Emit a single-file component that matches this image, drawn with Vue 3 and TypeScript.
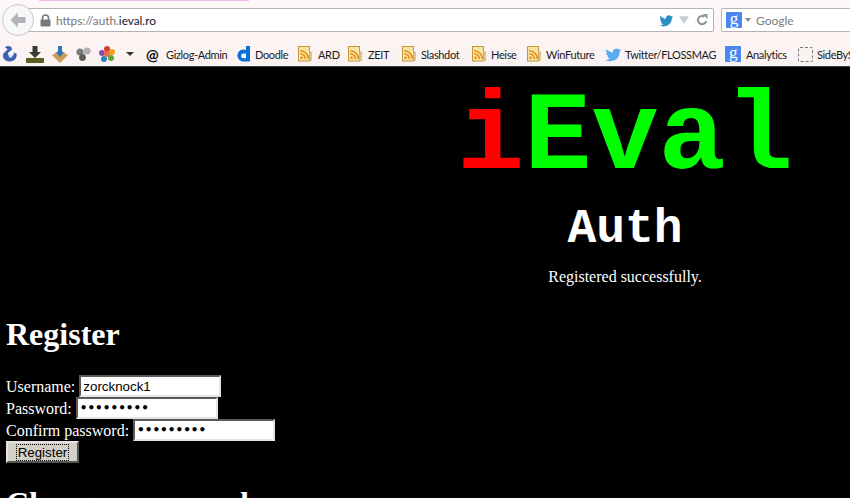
<script setup lang="ts">
interface Mark { label: string; icon: string; w: number; span: number }
const marks: Mark[] = [
  { label: 'Gizlog-Admin', icon: 'at', w: 20, span: 91 },
  { label: 'Doodle', icon: 'doodle', w: 18, span: 61 },
  { label: 'ARD', icon: 'rss', w: 20, span: 50 },
  { label: 'ZEIT', icon: 'rss', w: 20, span: 54 },
  { label: 'Slashdot', icon: 'rss', w: 19, span: 70 },
  { label: 'Heise', icon: 'rss', w: 19, span: 55 },
  { label: 'WinFuture', icon: 'rss', w: 19, span: 78 },
  { label: 'Twitter/FLOSSMAG', icon: 'bird', w: 20, span: 120 },
  { label: 'Analytics', icon: 'g', w: 21, span: 73 },
  { label: 'SideBySide', icon: 'dash', w: 19, span: 80 }
]
</script>

<template>
  <div class="page">
    <header class="chrome">
      <div class="tabline"><span class="tabglow"></span></div>
      <div class="navrow">
        <div class="back">
          <svg width="18" height="18" viewBox="0 0 18 18"><path d="M9 1.500 1.500 9 9 16.500v-4.500h7.500V6H9z" fill="#b0b3b8" /></svg>
        </div>
        <div class="url">
          <svg class="lock" width="11" height="13" viewBox="0 0 11 13"><path d="M2.500 6V4a3 3 0 0 1 6 0v2" fill="none" stroke="#77797b" stroke-width="1.600" /><rect x="0.500" y="5.500" width="10" height="7" rx="1" fill="#77797b" /></svg>
          <span class="addr"><span class="dim">https://auth.</span>ieval.ro</span>
          <span class="urlicons">
            <svg width="15" height="13" viewBox="0 0 17 14"><path d="M16 2.500c-.6.300-1.200.4-1.800.5.600-.4 1.100-1 1.300-1.700-.6.400-1.300.6-2 .8A3.200 3.200 0 0 0 8 5C5.500 4.900 3.200 3.700 1.600 1.700.8 3.200 1.200 5 2.600 6c-.5 0-1-.2-1.400-.4 0 1.600 1.100 2.900 2.600 3.200-.5.100-1 .2-1.500.1.400 1.300 1.600 2.200 3 2.200-1.400 1.100-3.200 1.600-5 1.400C6 15.500 14.500 12.800 14.500 4.500c.6-.5 1.100-1.200 1.500-2z" fill="#2b8fc4" /></svg>
            <svg width="10" height="8" viewBox="0 0 12 9"><path d="M0 0h12L6 9z" fill="#c9cdd1" /></svg>
            <svg class="reload" width="12" height="12" viewBox="0 0 13 13"><path d="M11 7.500A4.500 4.500 0 1 1 9 2.800" fill="none" stroke="#8d9399" stroke-width="2.200" /><path d="M7 0h5.500v5.500z" fill="#8d9399" /></svg>
          </span>
        </div>
        <div class="search">
          <span class="gbox">g</span>
          <span class="caret"></span>
          <span class="gname">Google</span>
        </div>
      </div>
      <div class="bookmarks">
        <div class="tools">
          <svg width="16" height="18" viewBox="0 0 16 18"><path d="M3 2c3-2 7-1 7 2 0 2-4 2-4 5 0 2 3 3 5 1.500 1-1 1-2 .5-3l3 1c1 4-2 8-6.500 8S1 14 1 10.500C1 7 5 6 5.500 4.500 5 3.500 3.500 3 3 2z" fill="#3a62b5" /><circle cx="8.500" cy="11" r="1.800" fill="#dfe8fa" /></svg>
          <svg width="18" height="17" viewBox="0 0 18 17"><path d="M6.500 0h5v6h3.500l-6 6-6-6h3.500z" fill="#3b3b35" /><rect x="0" y="12" width="18" height="5" rx="1" fill="#55601c" /></svg>
          <svg width="16" height="17" viewBox="0 0 16 17"><path d="M8 5 16 9 8 17 0 9z" fill="#c99a58" /><path d="M8 5 0 9l3-2 5-4 5 4 3 2z" fill="#e6c48b" /><path d="M6 0h4v6h2l-4 5-4-5h2z" fill="#2d74b8" /></svg>
          <svg width="15" height="14" viewBox="0 0 15 14"><circle cx="4" cy="5" r="3.600" fill="#7c7c7c" /><circle cx="11" cy="4" r="3.600" fill="#b1b1b1" /><circle cx="6.500" cy="10.500" r="3.400" fill="#5d5d5d" /></svg>
          <svg width="16" height="16" viewBox="0 0 16 16"><circle cx="8" cy="3" r="3" fill="#d93a2b" /><circle cx="13" cy="6" r="3" fill="#f0a21f" /><circle cx="12" cy="12" r="3" fill="#56a83c" /><circle cx="5" cy="13" r="3" fill="#2f7fc4" /><circle cx="3" cy="7" r="3" fill="#8a4bb0" /><circle cx="8" cy="8" r="3" fill="#e4713a" /></svg>
          <span class="tcaret"></span>
        </div>
        <div v-for="m in marks" :key="m.label" class="mark" :style="{ width: m.span + 'px' }">
          <span class="micon" :style="{ width: m.w + 'px' }">
            <span v-if="m.icon === 'at'" class="at">@</span>
            <svg v-else-if="m.icon === 'doodle'" width="13" height="16" viewBox="0 0 13 16"><path d="M9 0h4v15.500H6.500a6 6 0 1 1 2.500-11.400zM6.500 7.500a2.400 2.400 0 1 0 0 4.800H9V7.500z" fill="#0a6fd6" /></svg>
            <svg v-else-if="m.icon === 'rss'" width="15" height="16" viewBox="0 0 15 16"><rect x="0.500" y="0.500" width="11" height="14.500" fill="#f6e3a6" stroke="#c29a3c" /><path d="M11.500 4.500 14 6v9h-2.500z" fill="#d9c58c" /><circle cx="3.500" cy="11.800" r="1.300" fill="#e88b12" /><path d="M2.200 7.800a5.200 5.200 0 0 1 5.200 5.200M2.200 4.800a8.200 8.200 0 0 1 8.200 8.200" fill="none" stroke="#e88b12" stroke-width="1.500" /></svg>
            <svg v-else-if="m.icon === 'bird'" width="17" height="15" viewBox="0 0 17 14"><path d="M16 2.500c-.6.300-1.200.4-1.800.5.600-.4 1.100-1 1.300-1.700-.6.400-1.300.6-2 .8A3.200 3.200 0 0 0 8 5C5.500 4.900 3.200 3.700 1.600 1.700.8 3.200 1.200 5 2.600 6c-.5 0-1-.2-1.400-.4 0 1.600 1.100 2.900 2.600 3.200-.5.100-1 .2-1.500.1.400 1.300 1.600 2.200 3 2.200-1.400 1.100-3.200 1.600-5 1.400C6 15.500 14.500 12.800 14.500 4.500c.6-.5 1.100-1.200 1.500-2z" fill="#55acee" /></svg>
            <span v-else-if="m.icon === 'g'" class="gbox">g</span>
            <span v-else class="dash"></span>
          </span>
          <span>{{ m.label }}</span>
        </div>
      </div>
    </header>
    <main class="content">
      <div class="hero">
        <div class="logo"><span class="red">i</span><span class="green">Eval</span></div>
        <h2 class="sub">Auth</h2>
        <p class="msg">Registered successfully.</p>
      </div>
      <h1 class="reg">Register</h1>
      <form class="form" @submit.prevent>
        <div class="line">Username: <input class="field" type="text" value="zorcknock1" /></div>
        <div class="line">Password: <input class="field secret" type="password" value="123456789" /></div>
        <div class="line">Confirm password: <input class="field secret" type="password" value="123456789" /></div>
        <button class="btn" type="submit"><span class="focus">Register</span></button>
      </form>
      <h1 class="change">Change password</h1>
    </main>
  </div>
</template>

<style>
html, body { margin: 0; background: #000; overflow: hidden; }
</style>

<style scoped>
.page { width: 850px; height: 498px; overflow: hidden; display: flex; flex-direction: column; background: #000; }
.chrome { height: 67px; flex: none; background: linear-gradient(#fff8f8, #faf2f1); box-sizing: border-box; border-bottom: 1px solid #3a3a3a; font-family: "Lato", sans-serif; color: #1a1a1a; }
.tabline { height: 8px; }
.tabglow { display: block; margin-left: 39px; width: 210px; height: 1px; background: #f8b8f0; }
.navrow { height: 24px; display: flex; align-items: center; padding-left: 2px; position: relative; }
.back { width: 32px; height: 32px; box-sizing: border-box; border-radius: 50%; border: 1px solid #c8c8cc; background: #f8f7f8; display: flex; align-items: center; justify-content: center; position: relative; z-index: 1; margin-right: -5px; flex: none; }
.url { width: 685px; height: 24px; box-sizing: border-box; border: 1px solid #b4b4b4; border-left: none; border-radius: 0 2px 2px 0; background: #fff; display: flex; align-items: center; padding-left: 11px; flex: none; }
.lock { margin-right: 5px; }
.addr { font-size: 11.8px; color: #11162a; }
.dim { color: #727578; }
.urlicons { margin-left: auto; display: flex; align-items: center; gap: 5px; padding-right: 5px; }
.reload { margin-left: 2px; }
.search { margin-left: 7px; flex: 1; height: 24px; box-sizing: border-box; border: 1px solid #b4b4b4; border-right: none; border-radius: 2px 0 0 2px; background: #fff; display: flex; align-items: center; padding-left: 4px; }
.gbox { width: 16px; height: 16px; background: #4a87ee; color: #fff; font-family: "Liberation Serif", serif; font-size: 17px; line-height: 14px; text-align: center; border-radius: 1px; display: inline-block; }
.caret { margin: 0 3px; border: 3px solid transparent; border-top: 4px solid #8a8a8a; border-bottom: none; }
.gname { font-size: 12px; color: #7d7d7d; margin-left: 2px; }
.bookmarks { height: 34px; box-sizing: border-box; padding: 10px 0 0 2px; display: flex; align-items: center; font-size: 11px; letter-spacing: -0.35px; white-space: nowrap; overflow: hidden; }
.tools { display: flex; align-items: center; gap: 8px; margin-right: 12px; flex: none; }
.tcaret { margin-left: 3px; border: 4px solid transparent; border-top: 4px solid #333; border-bottom: none; }
.mark { display: flex; align-items: center; flex: none; }
.micon { display: flex; align-items: center; flex: none; }
.at { font-weight: 700; font-size: 15px; color: #111; }
.dash { width: 13px; height: 13px; border: 1px dashed #777; border-radius: 2px; }
.content { flex: none; color: #fff; font-family: "Liberation Serif", serif; font-size: 16px; line-height: 18px; padding: 0 0 0 6px; }
.hero { margin-left: 394px; text-align: center; }
.logo { font-family: "Liberation Mono", monospace; font-weight: 700; font-size: 112px; line-height: 127px; margin-top: 8px; }
.red { color: #f00; }
.green { color: #0f0; }
.sub { font-family: "Liberation Mono", monospace; font-weight: 700; font-size: 48px; line-height: 54px; margin: 0; }
.msg { margin: 12px 0 0; }
.reg, .change { font-size: 32px; line-height: 37px; margin: 0; font-weight: 700; }
.reg { margin-top: 30px; }
.form { margin-top: 22px; }
.line { height: 22px; line-height: 20px; }
.field { box-sizing: border-box; width: 142px; height: 22px; border: 2px solid; border-color: #5a5a5a #e4e4e4 #e4e4e4 #5a5a5a; background: #fff; color: #000; padding: 1px 2px; font-family: "Liberation Sans", sans-serif; font-size: 13.33px; margin: 0; vertical-align: bottom; }
.secret { font-family: "DejaVu Sans", sans-serif; font-weight: 700; font-size: 12px; }
.btn { display: block; box-sizing: border-box; width: 73px; height: 22px; padding: 0; border: 2px solid; border-color: #e4e4e4 #555 #555 #e4e4e4; background: #d4d0c8; color: #000; font-family: "Liberation Sans", sans-serif; font-size: 13.33px; }
.focus { outline: 1px dotted #000; padding: 0 1px; }
.change { margin-top: 22px; }
</style>
